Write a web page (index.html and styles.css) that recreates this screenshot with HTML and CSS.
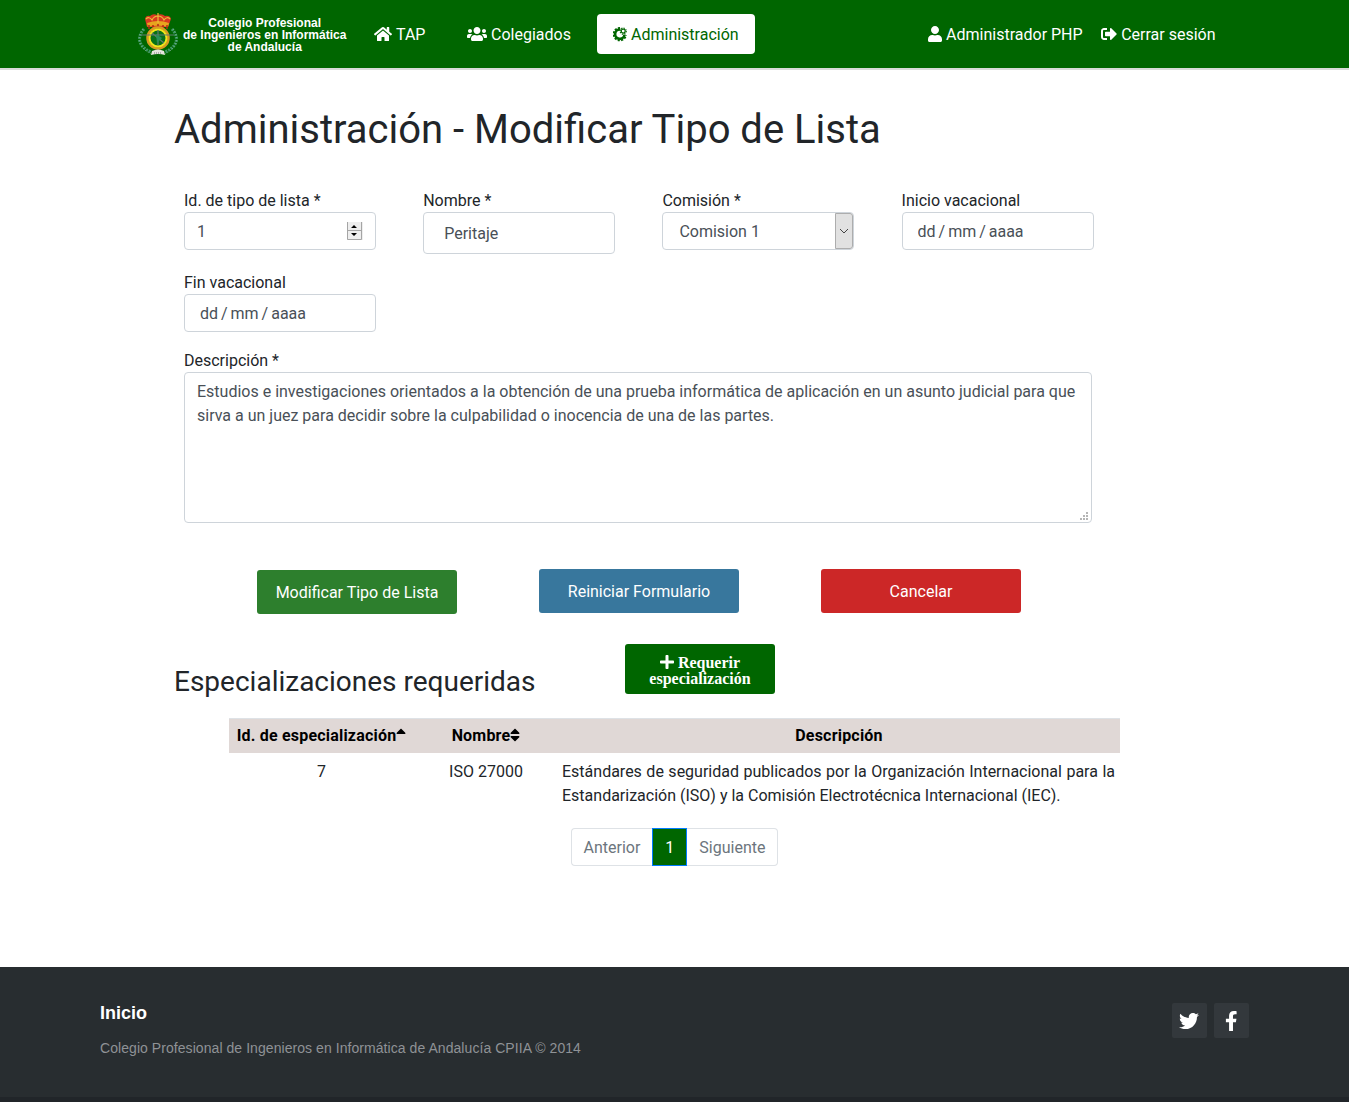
FILE: index.html
```html
<!DOCTYPE html>
<html lang="es">
<head>
<meta charset="utf-8">
<title>Administración - Modificar Tipo de Lista</title>
<link rel="stylesheet" href="styles.css">
</head>
<body>
<header class="topbar">
  <a class="brand">
    <svg class="crest" viewBox="0 0 42 44">
      <g fill="none" stroke="#3f9868" stroke-width="3" stroke-dasharray="2 1">
        <path d="M7 16C-1 25 2 34 14 39"/><path d="M35 16C43 25 40 34 28 39"/>
      </g>
      <g fill="none" stroke="#93b7a0" stroke-width=".7" stroke-dasharray="1 2">
        <path d="M6 16C-1 25 2 35 14 41"/><path d="M36 16C43 25 40 35 28 41"/>
      </g>
      <path d="M10 14L8 6q1-4 5-3 3-3 7-1 5-2 8 1 5-1 6 3l-3 8z" fill="#d83a20"/>
      <path d="M10 10q11-4 22 0l-1 4q-10-3-20 0z" fill="#e7a51e"/>
      <path d="M9 6q3-3 6 1 2-4 6-4 4 0 6 4 3-4 6-1M21 0v10" fill="none" stroke="#edbc3a" stroke-width="1.2"/>
      <path d="M12 12v4M16 12v3M21 11v4M26 12v3M30 12v4" stroke="#b52818" stroke-width="1.5"/>
      <circle cx="21" cy="25" r="10.500" fill="none" stroke="#d99a22" stroke-width="2.500"/>
      <circle cx="21" cy="25" r="8.500" fill="#087018" stroke="#f2e51b" stroke-width="2"/>
      <path d="M4 22h33M21 17v15M15 20l12 10" stroke="#617b70" stroke-width="1.2"/>
      <path d="M19 21l6 4-5 5z" fill="#298f59"/>
      <path d="M15 38q6-3 12 0l1 4q-7-2-14 0z" fill="#e5e5df"/>
      <path d="M17 40h8" stroke="#777" stroke-dasharray="1 1"/>
    </svg>
    <span class="brand-name">Colegio Profesional<br>de Ingenieros en Informática<br>de Andalucía</span>
  </a>
  <nav class="main-nav">
    <a class="nav-link tap"><svg class="icon" style="width:18px" viewBox="0 0 576 512"><path d="M280.37 148.26L96 300.11V464a16 16 0 0 0 16 16l112.06-.29a16 16 0 0 0 15.92-16V368a16 16 0 0 1 16-16h64a16 16 0 0 1 16 16v95.64a16 16 0 0 0 16 16.05L464 480a16 16 0 0 0 16-16V300L295.67 148.26a12.19 12.19 0 0 0-15.3 0zM571.6 251.47L488 182.56V44.05a12 12 0 0 0-12-12h-56a12 12 0 0 0-12 12v72.61L318.47 43a48 48 0 0 0-61 0L4.34 251.47a12 12 0 0 0-1.6 16.9l25.5 31A12 12 0 0 0 45.15 301l235.22-193.74a12.19 12.19 0 0 1 15.3 0L530.9 301a12 12 0 0 0 16.9-1.6l25.5-31a12 12 0 0 0-1.7-16.93z"/></svg>TAP</a>
    <a class="nav-link members"><svg class="icon" style="width:20px" viewBox="0 0 640 512"><path d="M96 224c35.3 0 64-28.7 64-64s-28.7-64-64-64-64 28.7-64 64 28.7 64 64 64zm448 0c35.3 0 64-28.7 64-64s-28.7-64-64-64-64 28.7-64 64 28.7 64 64 64zm32 32h-64c-17.6 0-33.5 7.1-45.1 18.6 40.3 22.1 68.9 62 75.1 109.4h66c17.7 0 32-14.3 32-32v-32c0-35.3-28.7-64-64-64zm-256 0c61.9 0 112-50.1 112-112S381.9 32 320 32 208 82.1 208 144s50.1 112 112 112zm76.8 32h-8.3c-20.8 10-43.9 16-68.5 16s-47.6-6-68.5-16h-8.3C179.6 288 128 339.6 128 403.2V432c0 26.5 21.5 48 48 48h288c26.5 0 48-21.5 48-48v-28.8c0-63.6-51.6-115.2-115.2-115.2zm-223.7-13.4C161.5 263.1 145.6 256 128 256H64c-35.3 0-64 28.7-64 64v32c0 17.7 14.3 32 32 32h65.9c6.3-47.4 34.9-87.3 75.2-109.4z"/></svg>Colegiados</a>
    <a class="nav-link active"><svg class="icon" style="width:14px" viewBox="0 0 14 16"><g fill="none" stroke="#006600"><path d="M7.300 3.500A4.700 4.700 0 1 0 11.500 8.700" stroke-width="2.600"/><path d="M7 1.900A6.200 6.200 0 1 0 13 9" stroke-width="2" stroke-dasharray="2.100 1.300"/><circle cx="10.200" cy="5.100" r="2" stroke-width="1.200"/><circle cx="10.200" cy="5.100" r="3.100" stroke-width="1.100" stroke-dasharray="1.300 1.130"/></g></svg>Administración</a>
  </nav>
  <nav class="user-nav">
    <a class="nav-link"><svg class="icon" style="width:14px" viewBox="0 0 448 512"><path d="M224 256c70.7 0 128-57.3 128-128S294.7 0 224 0 96 57.3 96 128s57.3 128 128 128zm89.6 32h-16.7c-22.2 10.2-46.9 16-72.9 16s-50.6-5.8-72.9-16h-16.7C60.2 288 0 348.2 0 422.4V464c0 26.5 21.5 48 48 48h352c26.5 0 48-21.5 48-48v-41.6c0-74.2-60.2-134.4-134.4-134.4z"/></svg>Administrador PHP</a>
    <a class="nav-link"><svg class="icon" style="width:16px" viewBox="0 0 512 512"><path d="M497 273L329 441c-15 15-41 4.500-41-17v-96H152c-13.300 0-24-10.700-24-24v-96c0-13.300 10.700-24 24-24h136V88c0-21.400 25.900-32 41-17l168 168c9.300 9.400 9.300 24.600 0 34zM192 436v-40c0-6.600-5.400-12-12-12H96c-17.700 0-32-14.300-32-32V160c0-17.700 14.300-32 32-32h84c6.600 0 12-5.400 12-12V76c0-6.600-5.400-12-12-12H96c-53 0-96 43-96 96v192c0 53 43 96 96 96h84c6.600 0 12-5.400 12-12z"/></svg>Cerrar sesión</a>
  </nav>
</header>

<main class="content">
  <h1>Administración - Modificar Tipo de Lista</h1>
  <form>
    <div class="fields">
      <div class="field"><label for="id">Id. de tipo de lista *</label>
        <div class="control number"><input id="id" value="1"><svg width="16" height="18" viewBox="0 0 16 18"><path fill="#eee" d="M0 0h16v18H0z"/><path d="M.5 0v17.500h14V0M0 8.500h15" fill="none" stroke="#a5a5a5"/><path fill="#000" d="M4 6l3-3 3 3zM4 11h6l-3 3z"/></svg></div></div>
      <div class="field"><label for="nombre">Nombre *</label><input class="control name" id="nombre" value="Peritaje"></div>
      <div class="field"><label for="comision">Comisión *</label>
        <div class="control select" id="comision"><span>Comision 1</span><i><svg width="10" height="6" viewBox="0 0 10 6"><path d="M1 1l4 4 4-4" fill="none" stroke="#444"/></svg></i></div></div>
      <div class="field"><label for="inicio">Inicio vacacional</label><input class="control date" id="inicio" value="dd / mm / aaaa"></div>
      <div class="field"><label for="fin">Fin vacacional</label><input class="control date" id="fin" value="dd / mm / aaaa"></div>
    </div>
    <div class="field description"><label for="desc">Descripción *</label>
      <div class="area-wrap"><textarea class="control" id="desc">Estudios e investigaciones orientados a la obtención de una prueba informática de aplicación en un asunto judicial para que sirva a un juez para decidir sobre la culpabilidad o inocencia de una de las partes.</textarea>
      <svg class="grip" width="8" height="8" viewBox="0 0 8 8"><path fill="#b5b5b5" d="M6 0h2v2H6zM3 3h2v2H3zM6 3h2v2H6zM0 6h2v2H0zM3 6h2v2H3zM6 6h2v2H6z"/></svg></div></div>
    <div class="actions">
      <button type="button" class="btn save">Modificar Tipo de Lista</button>
      <button type="button" class="btn reset">Reiniciar Formulario</button>
      <button type="button" class="btn cancel">Cancelar</button>
    </div>
  </form>
  <div class="section-head">
    <h2>Especializaciones requeridas</h2>
    <button type="button" class="require"><svg class="plus" viewBox="0 0 448 512"><path d="M416 208H272V64c0-17.670-14.330-32-32-32h-32c-17.670 0-32 14.330-32 32v144H32c-17.670 0-32 14.330-32 32v32c0 17.670 14.330 32 32 32h144v144c0 17.670 14.330 32 32 32h32c17.670 0 32-14.330 32-32V304h144c17.670 0 32-14.330 32-32v-32c0-17.670-14.330-32-32-32z"/></svg> Requerir<br>especialización</button>
  </div>
  <table class="list">
    <colgroup><col class="c-id"><col class="c-name"><col></colgroup>
    <thead><tr>
      <th>Id. de especialización<svg class="sort" viewBox="0 0 320 512"><path d="M279 224H41c-21.400 0-32.100-25.900-17-41L143 64c9.400-9.400 24.600-9.400 33.900 0l119 119c15.200 15.100 4.500 41-16.900 41z"/></svg></th>
      <th>Nombre<svg class="sort" viewBox="0 0 320 512"><path d="M41 288h238c21.400 0 32.100 25.900 17 41L177 448c-9.400 9.400-24.600 9.400-33.900 0L24 329c-15.100-15.100-4.400-41 17-41zm255-105L177 64c-9.400-9.400-24.600-9.400-33.900 0L24 183c-15.100 15.100-4.400 41 17 41h238c21.400 0 32.100-25.900 17-41z"/></svg></th>
      <th>Descripción</th>
    </tr></thead>
    <tbody><tr><td>7</td><td>ISO 27000</td><td class="text">Estándares de seguridad publicados por la Organización Internacional para la Estandarización (ISO) y la Comisión Electrotécnica Internacional (IEC).</td></tr></tbody>
  </table>
  <nav class="pages"><a>Anterior</a><a class="current">1</a><a>Siguiente</a></nav>
</main>

<footer class="footer">
  <div><h3>Inicio</h3><p>Colegio Profesional de Ingenieros en Informática de Andalucía CPIIA © 2014</p></div>
  <div class="social">
    <a class="twitter"><svg width="20" height="20" viewBox="0 0 512 512"><path d="M459.370 151.716c.325 4.548.325 9.097.325 13.645 0 138.720-105.583 298.558-298.558 298.558-59.452 0-114.680-17.219-161.137-47.106 8.447.974 16.568 1.299 25.340 1.299 49.055 0 94.213-16.568 130.274-44.832-46.132-.975-84.792-31.188-98.112-72.772 6.498.974 12.995 1.624 19.818 1.624 9.421 0 18.843-1.300 27.614-3.573-48.081-9.747-84.143-51.980-84.143-102.985v-1.299c13.969 7.797 30.214 12.670 47.431 13.319-28.264-18.843-46.781-51.005-46.781-87.391 0-19.492 5.197-37.360 14.294-52.954 51.655 63.675 129.300 105.258 216.365 109.807-1.624-7.797-2.599-15.918-2.599-24.040 0-57.828 46.782-104.934 104.934-104.934 30.213 0 57.502 12.670 76.670 33.137 23.715-4.548 46.456-13.320 66.599-25.340-7.798 24.366-24.366 44.833-46.132 57.827 21.117-2.273 41.584-8.122 60.426-16.243-14.292 20.791-32.161 39.308-52.628 54.253z"/></svg></a>
    <a><svg width="12.500" height="20" viewBox="0 0 320 512"><path d="M279.140 288l14.220-92.660h-88.910v-60.130c0-25.350 12.420-50.060 52.240-50.060h40.420V6.260S260.430 0 225.360 0c-73.220 0-121.080 44.380-121.080 124.720v70.620H22.890V288h81.390v224h100.170V288z"/></svg></a>
  </div>
</footer>
</body>
</html>
```
FILE: styles.css
```css
* { box-sizing: border-box; }
body { margin: 0; min-height: 1102px; background: #fff; color: #212529; font: 400 16px/24px Roboto, sans-serif; display: flex; flex-direction: column; }
svg { fill: currentColor; }
h1, h2, h3, p { margin: 0; font-weight: 400; }

.topbar { height: 70px; background: #006600; border-bottom: 2px solid #d9dcd9; padding: 0 133.500px 0 137px; display: flex; align-items: center; color: #fff; }
.brand { display: flex; width: 210px; flex: none; align-items: center; gap: 4px; padding-top: 2px; }
.crest { width: 42px; height: 44px; flex: none; }
.brand-name { font: 700 12px/12px "Liberation Sans", Arial, sans-serif; text-align: center; white-space: nowrap; }
.main-nav { display: flex; margin-left: 27px; }
.nav-link { display: flex; align-items: center; gap: 4px; height: 40px; padding-top: 2px; white-space: nowrap; }
.icon { height: 16px; flex: none; margin-top: -2px; }
.tap { width: 93px; }
.members { width: 130px; }
.active { width: 158px; padding-left: 16px; background: #fff; color: #006600; border-radius: 4px; }
.user-nav { display: flex; gap: 18.500px; margin-left: auto; }

.content { flex: 1; padding: 35px 174px 0; }
h1 { font-size: 40px; height: 48px; line-height: 50px; }
.fields { display: grid; grid-template-columns: repeat(4, 192px); column-gap: 47.200px; row-gap: 16px; padding: 35px 10px 0; }
.field { display: flex; flex-direction: column; }
.field label { height: 24px; line-height: 26px; }
.control { width: 192px; height: 38px; border: 1px solid #ced4da; border-radius: 4px; background: #fff; color: #495057; font: inherit; padding: 6px 12px; outline: 0; display: block; }
.number { display: flex; align-items: center; justify-content: space-between; }
.number input { width: 100px; border: 0; padding: 2px 0 0; font: inherit; color: inherit; background: none; outline: 0; }
.name { height: 42px; padding: 8px 20px; }
.select { display: flex; padding: 0 0 0 16px; align-items: center; justify-content: space-between; }
.select span { padding-top: 2px; }
.select i { width: 18px; height: 36px; background: #e1e1e1; border: 1px solid #adadad; border-radius: 0 3px 3px 0; display: grid; place-items: center; }
.select i svg { display: block; }
.date { padding-left: 15px; word-spacing: -1px; }
.description { padding: 16px 10px 0; }
.area-wrap { position: relative; width: 908px; height: 151px; }
textarea.control { width: 908px; height: 151px; resize: none; overflow: hidden; padding-top: 7px; }
.grip { position: absolute; right: 4px; bottom: 3px; }
.actions { display: flex; gap: 82px; padding: 46px 0 0 83px; }
.btn { width: 200px; height: 44px; border: 0; border-radius: 3px; padding: 2px 0 0; color: #fff; font: inherit; }
.save { background: #2d7f2d; margin-top: 1px; }
.reset { background: #38779d; }
.cancel { background: #cc2727; }
.section-head { display: flex; align-items: flex-start; padding-top: 30px; height: 104px; }
h2 { width: 451px; font-size: 28px; line-height: 34px; margin-top: 21px; }
.require { width: 150px; height: 50px; border: 0; border-radius: 3px; background: #006600; color: #fff; padding: 2px 0 0; font: 700 16px/16px "Liberation Serif", serif; }
.plus { width: 14px; height: 16px; vertical-align: -2px; }

.list { width: 891px; margin-left: 55px; table-layout: fixed; border-collapse: collapse; }
.c-id { width: 185px; }
.c-name { width: 144px; }
th { height: 34px; padding: 0; background: #e0d8d6; color: #000; font-weight: 700; border-top: 1px solid #dee2e6; letter-spacing: .2px; white-space: nowrap; }
.sort { width: 10px; height: 16px; vertical-align: -2px; }
td { padding: 7px 0 0; text-align: center; vertical-align: top; }
td.text { padding-left: 4px; padding-right: 5px; text-align: justify; }
.pages { display: flex; justify-content: center; margin-top: 20px; }
.pages a { height: 38px; border: 1px solid #dee2e6; padding: 7px 12px 5px; color: #6c757d; }
.pages a:first-child { border-radius: 4px 0 0 4px; border-right: 0; }
.pages a:last-child { border-radius: 0 4px 4px 0; border-left: 0; }
.pages .current { background: #006600; border-color: #007bff; color: #fff; }

.footer { height: 135px; background: #282d30; border-bottom: 5px solid #212529; padding: 36px 100px 0; display: flex; justify-content: space-between; font-family: "Liberation Sans", Arial, sans-serif; }
h3 { color: #fff; font-size: 18px; line-height: 20px; font-weight: 700; }
.footer p { color: #8f9296; font-size: 14px; line-height: 20px; margin-top: 15px; letter-spacing: .06px; }
.social { display: flex; gap: 7px; }
.social a { width: 35px; height: 35px; border-radius: 2px; background: #33383c; color: #fff; display: grid; place-items: center; }
.social .twitter { padding-right: 2px; }
```
